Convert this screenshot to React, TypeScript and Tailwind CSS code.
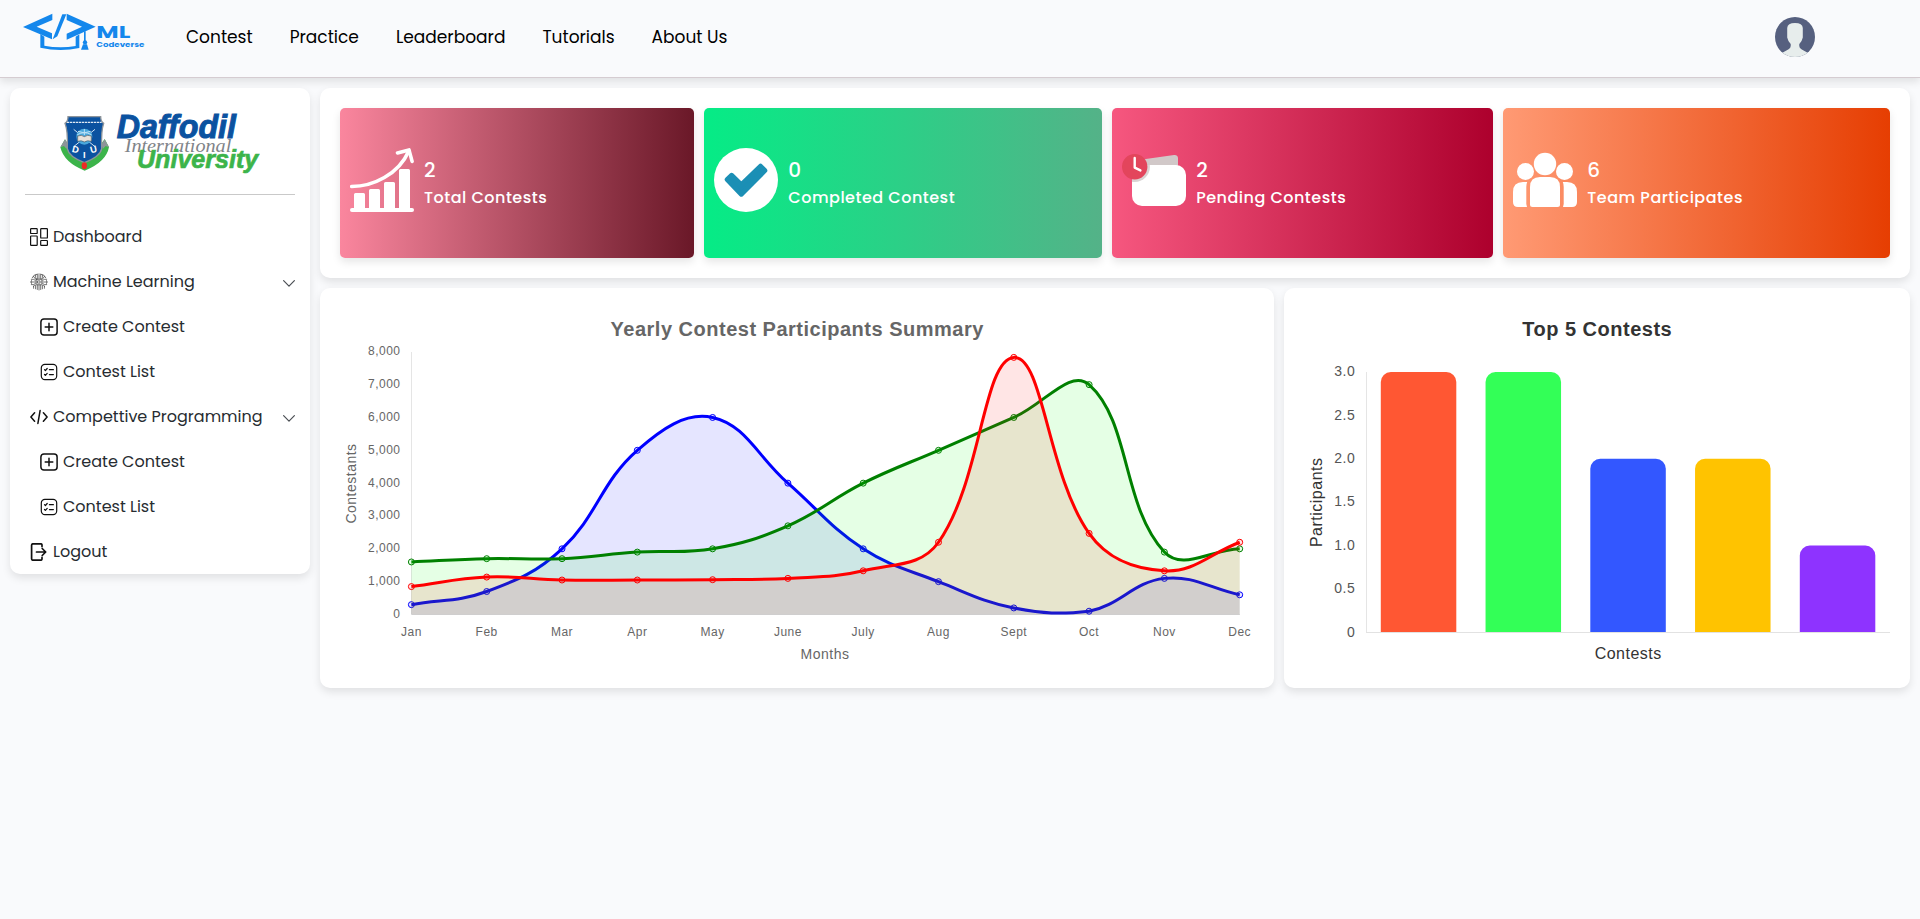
import type { ReactNode } from "react";

/* ---------- Logos ---------- */

function CodeverseLogo() {
  return (
    <svg width="150" height="54" viewBox="0 0 450 162" className="block shrink-0" aria-label="ML Codeverse">
      <g fill="#1487ec">
        <path d="M157 41v19l-47 20 46 20v18L69 81z" />
        <path d="M200 41v19l46 20-46 21v18l87-39z" />
        <path d="M187 43h12l-27 66-14 9z" />
        <path d="M121 102l12 8v27q46 9 94 1v-28l11-7v41q-58 13-117-1z" />
        <path d="M252 94h5v30h-5z" />
        <circle cx="255" cy="127" r="6.5" />
        <path d="M249 133h12l5 16h-23z" />
      </g>
      <text x="289" y="115" textLength="102" lengthAdjust="spacingAndGlyphs" className="fill-[#1487ec] font-['Poppins',sans-serif] text-[54px] font-bold">ML</text>
      <text x="289" y="142" textLength="144" lengthAdjust="spacingAndGlyphs" className="fill-[#1487ec] font-['Poppins',sans-serif] text-[23px] font-bold">Codeverse</text>
    </svg>
  );
}

function UniversityLogo() {
  return (
    <svg width="200" height="68" viewBox="180 316 600 204" className="block" aria-label="Daffodil International University">
      <path d="M181 440l14-24 10 16v20l98-1v-20l11-16 13 24q-8 45-73 71-62-24-73-70z" fill="#3cb44a" />
      <path d="M181 440l14-24 10 16-6 12-7-8zM327 440l-13-24-10 16 5 12 8-8z" fill="#8e9499" />
      <path d="M204 348h98q0 14 9 20-8 22-6 76-4 24-52 42-47-18-51-42 2-54-7-76 9-6 9-20z" fill="#0b52a0" stroke="#8d949b" strokeWidth="4" />
      <path d="M201 365h104" stroke="#dfe9f4" strokeWidth="4" strokeDasharray="7 2" />
      <path d="M221 386l64 52M285 386l-64 52" stroke="#cfe3f3" strokeWidth="3" />
      <circle cx="253" cy="408" r="24" fill="#4aa9de" />
      <path d="M232 402q21-12 42 0M234 392q19 9 38 0M253 385v18" stroke="#bfe2f5" strokeWidth="3" fill="none" />
      <path d="M233 406q12-5 20 2 9-7 21-2v16q-12-4-21 2-9-6-20-2z" fill="#e9e2da" stroke="#4d5860" strokeWidth="2" />
      <g className="fill-white font-['Liberation_Sans',sans-serif] text-[28px] font-bold">
        <text x="217" y="456" transform="rotate(14 226 446)">D</text>
        <text x="249" y="471">I</text>
        <text x="270" y="456" transform="rotate(-14 280 446)">U</text>
      </g>
      <ellipse cx="253" cy="495" rx="8" ry="10" fill="#ee2b24" />
      <text x="350" y="413" textLength="358" lengthAdjust="spacingAndGlyphs" strokeWidth="3" className="fill-[#0b52a0] stroke-[#0b52a0] font-['Liberation_Sans',sans-serif] text-[98px] font-bold italic">Daffodil</text>
      <text x="374" y="455" textLength="320" lengthAdjust="spacingAndGlyphs" className="fill-[#7f8489] font-['Liberation_Serif',serif] text-[56px] italic">International</text>
      <text x="411" y="502" textLength="364" lengthAdjust="spacingAndGlyphs" strokeWidth="2" className="fill-[#3cb44a] stroke-[#3cb44a] font-['Liberation_Sans',sans-serif] text-[76px] font-bold italic">University</text>
    </svg>
  );
}

function Avatar() {
  return (
    <svg width="40" height="40" viewBox="0 0 40 40" className="block">
      <clipPath id="avatar-clip"><circle cx="20" cy="20" r="20" /></clipPath>
      <g clipPath="url(#avatar-clip)">
        <rect width="40" height="40" fill="#56607f" />
        <path d="M12.2 11Q12.5 6 20 6t7.8 5v9.500Q26.800 25 24.300 27q-.5 4 2.500 5.500L34 36.500V40H6v-3.500l7.200-4q3-1.500 2.500-5.500-2.500-2-3.500-6.500z" fill="#e7edec" />
      </g>
    </svg>
  );
}

/* ---------- Sidebar icons ---------- */

function Icon({ children, width = 1.5 }: { children: ReactNode; width?: number }) {
  return (
    <svg width="18" height="18" viewBox="0 0 18 18" fill="none" stroke="#111111" strokeWidth={width} strokeLinecap="round" strokeLinejoin="round" className="block shrink-0">
      {children}
    </svg>
  );
}

const DashboardIcon = () => (
  <Icon width={1.2}>
    <rect x=".6" y=".6" width="6.600" height="4.900" rx=".6" />
    <rect x=".6" y="8" width="6.600" height="9.400" rx=".6" />
    <rect x="10.700" y=".6" width="6.700" height="9.400" rx=".6" />
    <rect x="10.700" y="12.500" width="6.700" height="4.900" rx=".6" />
  </Icon>
);

const BrainIcon = () => (
  <Icon width={0.7}>
    <g stroke="#3a3a3a">
      <rect x="6.200" y="6.200" width="5.600" height="5.600" rx=".5" />
      <rect x="7.900" y="7.900" width="2.200" height="2.200" />
      <path d="M9 .8v5.200M7.300 1.200v4.800M10.700 1.200v4.800M5.400 2.200v2.300l1 1.500M12.600 2.200v2.300l-1 1.500M3.500 3.500l2.300 2.900M14.500 3.500l-2.300 2.900" />
      <path d="M1.300 6.300h2l2 1M16.700 6.300h-2l-2 1M.9 9h5M17.100 9h-5M1.300 11.600h2l2-1M16.700 11.600h-2l-2-1" />
      <path d="M9 12v5M7.300 12v4.500M10.700 12v4.500M5.600 12.200v3.600M12.400 12.200v3.600M3.300 13.300l1.500-1.200M14.700 13.300l-1.500-1.200M3.600 13.300v2M14.400 13.300v2" />
      <path d="M2.200 4.700Q4 1 7 1.200M15.800 4.700Q14 1 11 1.200M1.400 7.500q-1 1.500 0 3M16.600 7.500q1 1.500 0 3" />
    </g>
  </Icon>
);

const PlusSquareIcon = () => (
  <Icon>
    <rect x=".9" y=".9" width="16.200" height="16.200" rx="3" />
    <path d="M9 5.200v7.600M5.200 9h7.600" />
  </Icon>
);

const ListIcon = () => (
  <Icon width={1.2}>
    <rect x="1.300" y="1.300" width="15.400" height="15.400" rx="3.600" />
    <path d="M4.500 6.600l.9.9 1.800-2M4.500 11.500l.9.9 1.800-2M9.400 6.700h4M9.400 11.600h4" />
  </Icon>
);

const CodeIcon = () => (
  <Icon width={1.5}>
    <path d="M4.600 4.800L.9 9l3.700 4.200M13.400 4.800L17.100 9l-3.700 4.200M10.100 2.600L7.900 15.400" />
  </Icon>
);

const LogoutIcon = () => (
  <Icon width={1.7}>
    <path d="M12 3.600V2q0-1.200-1.200-1.200H3Q1.600.8 1.600 2.200v13.600q0 1.400 1.400 1.400h7.800q1.200 0 1.200-1.200v-1.600" />
    <path d="M6.500 9h9M12.200 5.500L15.700 9l-3.500 3.500" />
  </Icon>
);

const Chevron = () => (
  <svg width="12" height="7" viewBox="0 0 12 7" fill="none" stroke="#4b4f54" strokeWidth="1.200" strokeLinecap="round" strokeLinejoin="round" className="ml-auto mt-[3px] block">
    <path d="M.6.7L6 6.200 11.400.7" />
  </svg>
);

/* ---------- Stat card icons ---------- */

const GrowthIcon = () => (
  <svg width="64" height="64" viewBox="0 0 64 64" fill="#fff" className="block shrink-0">
    <rect y="60" width="64" height="4" rx="2" />
    <path d="M4 61V46.500q0-1.500 1.500-1.500h8q1.500 0 1.500 1.500V61zM19 61V42.500q0-1.500 1.500-1.500h8q1.500 0 1.500 1.500V61zM34 61V35.500q0-1.500 1.500-1.500h8q1.500 0 1.500 1.500V61zM49 61V22.500q0-1.500 1.500-1.500h8q1.500 0 1.500 1.500V61z" />
    <path d="M1.700 38.500C23 38.500 48.500 26.500 58.800 3" fill="none" stroke="#fff" strokeWidth="3.600" strokeLinecap="round" />
    <path d="M47.500 4.900L59 1.900l3.100 11.500" fill="none" stroke="#fff" strokeWidth="3.600" strokeLinecap="round" strokeLinejoin="round" />
  </svg>
);

const CheckIcon = () => (
  <svg width="64" height="64" viewBox="0 0 64 64" className="block shrink-0">
    <circle cx="32" cy="32" r="32" fill="#fff" />
    <path d="M13.200 31.500l4.400-4.200 9.700 9.500 19.200-18.600 4.300 4.400-23.500 23.600z" fill="#1b8fb5" stroke="#1b8fb5" strokeWidth="5" strokeLinejoin="round" />
  </svg>
);

const PendingIcon = () => (
  <svg width="64" height="64" viewBox="0 0 64 64" className="block shrink-0">
    <path d="M22 11.300L52 7.100q4-.4 4 3.500V18H22z" fill="#d1c8c8" />
    <rect x="10" y="17" width="54" height="41" rx="10" fill="#fff" />
    <clipPath id="folder-clip"><rect x="10" y="17" width="54" height="41" rx="2" /></clipPath>
    <circle cx="12.700" cy="18.700" r="15.200" fill="#dad3d3" clipPath="url(#folder-clip)" />
    <circle cx="12.700" cy="18.700" r="12.700" fill="#e3455c" />
    <path d="M12.700 10v9.600l5.700 2.800" fill="none" stroke="#fff" strokeWidth="2.400" strokeLinecap="round" strokeLinejoin="round" />
  </svg>
);

const TeamIcon = () => (
  <svg width="64" height="64" viewBox="0 0 64 64" fill="#fff" className="block shrink-0">
    <circle cx="32" cy="16" r="11.200" />
    <circle cx="12.500" cy="23.500" r="8.500" />
    <circle cx="51.500" cy="23.500" r="8.500" />
    <path d="M17 39q0-10 10-10h10q10 0 10 10v17.500q0 2.500-2.500 2.500h-25q-2.500 0-2.500-2.500z" />
    <path d="M14.200 34Q13.300 36 13.300 39v17l.7 3H5q-5 0-5-5V44q0-10 10-10zM49.800 34q.9 2 .9 5v17l-.7 3h9q5 0 5-5V44q0-10-10-10z" />
  </svg>
);

/* ---------- Layout pieces ---------- */

const navLinks = ["Contest", "Practice", "Leaderboard", "Tutorials", "About Us"];

function Navbar() {
  return (
    <header className="relative flex h-[78px] items-start border-b border-[#d5ccd1] bg-[#f9fafc] shadow-[0_4px_8px_rgba(0,0,0,0.1)]">
      <CodeverseLogo />
      <nav className="ml-[36px] mt-[25px] flex gap-[37px] text-[17px] leading-[25px] text-black">
        {navLinks.map((label) => (
          <a key={label}>{label}</a>
        ))}
      </nav>
      <div className="ml-auto mr-[105px] mt-[17px]">
        <Avatar />
      </div>
    </header>
  );
}

function SideItem({ icon, label, nested, expandable }: { icon: ReactNode; label: string; nested?: boolean; expandable?: boolean }) {
  return (
    <li className={nested ? "flex h-[45px] items-center pl-[15px]" : "flex h-[45px] items-center pl-[5px]"}>
      {icon}
      <span className="ml-[5px] whitespace-nowrap leading-[24px]">{label}</span>
      {expandable && <Chevron />}
    </li>
  );
}

function Sidebar() {
  return (
    <aside className="flex h-[486px] w-[300px] shrink-0 flex-col rounded-[10px] bg-white px-[15px] shadow-[0_4px_8px_rgba(0,0,0,0.1)]">
      <div className="flex h-[107px] justify-center pt-[17.5px]">
        <UniversityLogo />
      </div>
      <hr className="border-t border-[#c9c9c9]" />
      <ul className="mt-[19px] text-[#272c31]">
        <SideItem icon={<DashboardIcon />} label="Dashboard" />
        <SideItem icon={<BrainIcon />} label="Machine Learning" expandable />
        <SideItem icon={<PlusSquareIcon />} label="Create Contest" nested />
        <SideItem icon={<ListIcon />} label="Contest List" nested />
        <SideItem icon={<CodeIcon />} label="Compettive Programming" expandable />
        <SideItem icon={<PlusSquareIcon />} label="Create Contest" nested />
        <SideItem icon={<ListIcon />} label="Contest List" nested />
        <SideItem icon={<LogoutIcon />} label="Logout" />
      </ul>
    </aside>
  );
}

const stats = [
  { value: 2, label: "Total Contests", icon: <GrowthIcon />, gradient: "bg-[linear-gradient(90deg,#fa869e,#6a1828)]" },
  { value: 0, label: "Completed Contest", icon: <CheckIcon />, gradient: "bg-[linear-gradient(90deg,#05ec86,#54b288)]" },
  { value: 2, label: "Pending Contests", icon: <PendingIcon />, gradient: "bg-[linear-gradient(90deg,#f6577f,#ad002d)]" },
  { value: 6, label: "Team Participates", icon: <TeamIcon />, gradient: "bg-[linear-gradient(90deg,#ff9a74,#e63e02)]" },
];

function StatCards() {
  return (
    <section className="flex h-[190px] gap-[10px] rounded-[10px] bg-white p-[20px] shadow-[0_4px_8px_rgba(0,0,0,0.1)]">
      {stats.map((stat) => (
        <div key={stat.label} className={`flex flex-auto items-center gap-[10px] rounded-[5px] px-[10px] text-white shadow-[0_4px_8px_rgba(0,0,0,0.1)] ${stat.gradient}`}>
          <div className="-mt-[6px]">{stat.icon}</div>
          <div className="-mt-[3px] whitespace-nowrap font-medium tracking-[0.5px]">
            <p className="text-[20px] leading-[32px]">{stat.value}</p>
            <p className="leading-[24px]">{stat.label}</p>
          </div>
        </div>
      ))}
    </section>
  );
}

/* ---------- Line chart ---------- */

const months = ["Jan", "Feb", "Mar", "Apr", "May", "June", "July", "Aug", "Sept", "Oct", "Nov", "Dec"];
const series = [
  { color: "#0000ff", fill: "rgba(0,0,255,0.1)", values: [300, 700, 2000, 5000, 6000, 4000, 2000, 1000, 200, 100, 1100, 600] },
  { color: "#008000", fill: "rgba(0,255,0,0.1)", values: [1600, 1700, 1700, 1900, 2000, 2700, 4000, 5000, 6000, 7000, 1900, 2000] },
  { color: "#ff0000", fill: "rgba(255,0,0,0.1)", values: [850, 1140, 1050, 1050, 1060, 1100, 1330, 2200, 7830, 2470, 1330, 2200] },
];

const LEFT = 411.4;
const RIGHT = 1239.7;
const TOP = 351.8;
const BOTTOM = 614.5;
const px = (i: number) => LEFT + (i * (RIGHT - LEFT)) / 11;
const py = (v: number) => BOTTOM - (v / 8000) * (BOTTOM - TOP);
const clampY = (y: number) => Math.min(BOTTOM, Math.max(TOP, y));

function splinePath(values: number[]) {
  const tension = 0.4;
  const pts = values.map((v, i) => ({ x: px(i), y: py(v) }));
  const controls = pts.map((cur, i) => {
    const prev = pts[Math.max(0, i - 1)];
    const next = pts[Math.min(pts.length - 1, i + 1)];
    const d1 = Math.hypot(cur.x - prev.x, cur.y - prev.y);
    const d2 = Math.hypot(next.x - cur.x, next.y - cur.y);
    const a = (tension * d1) / (d1 + d2);
    const b = (tension * d2) / (d1 + d2);
    const dx = next.x - prev.x;
    const dy = next.y - prev.y;
    return { bx: cur.x - a * dx, by: clampY(cur.y - a * dy), ax: cur.x + b * dx, ay: clampY(cur.y + b * dy) };
  });
  return pts.reduce((d, p, i) => {
    if (i === 0) return `M${p.x} ${p.y}`;
    const c0 = controls[i - 1];
    const c1 = controls[i];
    return `${d}C${c0.ax} ${c0.ay} ${c1.bx} ${c1.by} ${p.x} ${p.y}`;
  }, "");
}

function LineChart() {
  return (
    <section className="w-[954px] shrink-0 rounded-[10px] bg-white shadow-[0_4px_8px_rgba(0,0,0,0.1)]">
      <svg width="954" height="400" viewBox="320 288 954 400" className="block fill-[#666666] font-['Liberation_Sans',sans-serif] text-[12px] tracking-[0.5px]">
        <text x="797.200" y="336" textAnchor="middle" className="text-[20px] font-bold">Yearly Contest Participants Summary</text>
        <path d="M411.500 352V614.500H1240" fill="none" stroke="#e5e5e5" />
        {[0, 1000, 2000, 3000, 4000, 5000, 6000, 7000, 8000].map((v) => (
          <text key={v} x="400.500" y={py(v) + 3.4} textAnchor="end">{v.toLocaleString("en-US")}</text>
        ))}
        {months.map((m, i) => (
          <text key={m} x={px(i)} y="636" textAnchor="middle">{m}</text>
        ))}
        <text x="825" y="659" textAnchor="middle" className="text-[14px]">Months</text>
        <text x="355.700" y="483.500" textAnchor="middle" transform="rotate(-90 355.7 483.5)" className="text-[14px]">Contestants</text>
        {series.map((s) => {
          const line = splinePath(s.values);
          return (
            <g key={s.color}>
              <path d={`${line}L${RIGHT} ${BOTTOM}L${LEFT} ${BOTTOM}Z`} fill={s.fill} />
              <path d={line} fill="none" stroke={s.color} strokeWidth="3" />
              {s.values.map((v, i) => (
                <circle key={i} cx={px(i)} cy={py(v)} r="3" fill={s.fill} stroke={s.color} strokeWidth="1" />
              ))}
            </g>
          );
        })}
      </svg>
    </section>
  );
}

/* ---------- Bar chart ---------- */

const bars = [
  { value: 3, color: "#ff5733" },
  { value: 3, color: "#33ff57" },
  { value: 2, color: "#3357ff" },
  { value: 2, color: "#ffc300" },
  { value: 1, color: "#8e33ff" },
];

function BarChart() {
  const y = (v: number) => 632.4 - v * 86.8;
  return (
    <section className="min-w-0 flex-1 rounded-[10px] bg-white shadow-[0_4px_8px_rgba(0,0,0,0.1)]">
      <svg width="626" height="400" viewBox="1284 288 626 400" className="block fill-[#333333] font-['Liberation_Sans',sans-serif] text-[16px] tracking-[0.5px]">
        <text x="1597.200" y="336" textAnchor="middle" className="text-[20px] font-bold">Top 5 Contests</text>
        {["0", "0.5", "1.0", "1.5", "2.0", "2.5", "3.0"].map((t) => (
          <text key={t} x="1355.200" y={y(Number(t)) + 4.2} textAnchor="end" className="fill-[#555555] text-[14px]">{t}</text>
        ))}
        <path d="M1366.500 372V632.500" stroke="#e5e5e5" />
        {bars.map((b, i) => {
          const x = 1380.8 + i * 104.75;
          const top = y(b.value);
          return <path key={i} d={`M${x} 632.500V${top + 10}a10 10 0 0 1 10-10h55.500a10 10 0 0 1 10 10V632.500z`} fill={b.color} />;
        })}
        <path d="M1366 632.500H1890" stroke="#e2e2e2" />
        <text x="1628.200" y="659" textAnchor="middle">Contests</text>
        <text x="1322.300" y="502.300" textAnchor="middle" transform="rotate(-90 1322.3 502.3)">Participants</text>
      </svg>
    </section>
  );
}

export default function App() {
  return (
    <div className="min-h-[919px] w-full bg-[#f9fafc] font-['Poppins',sans-serif] text-[16px]">
      <Navbar />
      <main className="relative flex items-start gap-[10px] p-[10px]">
        <Sidebar />
        <div className="flex min-w-0 flex-1 flex-col gap-[10px]">
          <StatCards />
          <div className="flex h-[400px] gap-[10px]">
            <LineChart />
            <BarChart />
          </div>
        </div>
      </main>
    </div>
  );
}
